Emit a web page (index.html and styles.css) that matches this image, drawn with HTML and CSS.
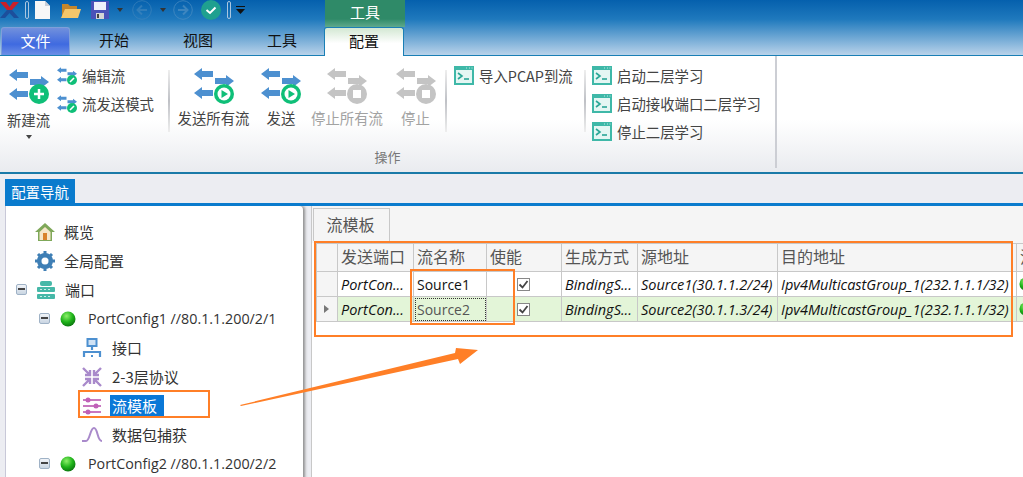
FILE: index.html
```html
<!DOCTYPE html>
<html lang="zh-CN">
<head>
  <meta charset="UTF-8" />
  <title>配置</title>
  <link rel="stylesheet" href="styles.css">
</head>
<body>
  <svg class="defs" width="0" height="0">
    <defs>
      <symbol id="arrows" viewBox="0 0 40 31">
        <path d="M0 6 8 0V3H19V9H8V12Z" />
        <path d="M40 13 32 7V10H21V16H32V19Z" />
        <path d="M0 25 8 19V22H19V28H8V31Z" />
      </symbol>
      <symbol id="term" viewBox="0 0 20 19">
        <rect width="20" height="19" fill="#3fb8a8" />
        <rect x="2" y="4" width="16" height="13" fill="#e4f6f3" />
        <path d="M4 7 8 10 4 13" fill="none" stroke="#2aa696" stroke-width="1.6" />
        <path d="M10 13H15" stroke="#2aa696" stroke-width="1.6" />
        <path d="M12 2H13M15 2H16M17.500 2H18.500" stroke="#bfe9e2" stroke-width="1" />
      </symbol>
      <radialGradient id="ball" cx="0.4" cy="0.3" r="0.75">
        <stop offset="0" stop-color="#8df06a" />
        <stop offset="0.55" stop-color="#1fb31a" />
        <stop offset="1" stop-color="#0a6e0e" />
      </radialGradient>
    </defs>
  </svg>

  <!-- title bar and tabs -->
  <header class="top">
    <div class="qat">
      <div class="qat-icons">
        <svg class="q-logo" width="19" height="18" viewBox="0 0 19 18"><path d="M0 1H6L9.500 6 13 1H19L12 9H7Z" fill="#c8202a" /><path d="M7 9H12L19 17H14L9.500 12 5 17H0Z" fill="#1c4f9c" /></svg>
        <span class="pill"></span>
        <svg class="q-doc" width="15" height="18" viewBox="0 0 15 18"><path d="M0 0H10L15 5V18H0Z" fill="#f7f7f7" /><path d="M10 0V5H15" fill="#c9ced6" /></svg>
        <svg class="q-folder" width="20" height="16" viewBox="0 0 20 16"><path d="M1 2H7L9 4H16V15H1Z" fill="#c4862c" /><path d="M4 7H20L17 16H0Z" fill="#f4c66a" /></svg>
        <svg class="q-save" width="18" height="18" viewBox="0 0 18 18"><path d="M0 0H18V18H0Z" fill="#4a52b8" /><rect x="3" y="1" width="12" height="8" fill="#eef1fb" /><rect x="5" y="12" width="8" height="6" fill="#d5d5d5" /><rect x="6" y="13" width="2" height="4" fill="#444" /></svg>
        <span class="caret q-caret1"></span>
        <svg class="q-back" width="20" height="20" viewBox="0 0 20 20"><circle cx="10" cy="10" r="9.300" fill="none" stroke="#3f85bd" /><path d="M15 10H6M10 5.500 5.500 10 10 14.500" fill="none" stroke="#3f85bd" stroke-width="2" /></svg>
        <span class="caret q-caret2"></span>
        <svg class="q-fwd" width="20" height="20" viewBox="0 0 20 20"><circle cx="10" cy="10" r="9.300" fill="none" stroke="#4f90c4" /><path d="M5 10H14M10 5.500 14.500 10 10 14.500" fill="none" stroke="#4f90c4" stroke-width="2" /></svg>
        <svg class="q-ok" width="20" height="20" viewBox="0 0 20 20"><circle cx="10" cy="10" r="10" fill="#1fa08f" /><path d="M5.500 10 9 13 14.500 7.500" fill="none" stroke="#fff" stroke-width="2" /></svg>
        <span class="pill q-pill2"></span>
        <svg class="q-more" width="9" height="8" viewBox="0 0 9 8"><path d="M0 0.500H9" stroke="#111" /><path d="M0 3H9L4.500 8Z" fill="#111" /></svg>
      </div>
      <div class="ctx-title">工具</div>
    </div>
    <nav class="tabs">
      <div class="tab tab-file">文件</div>
      <div class="tab">开始</div>
      <div class="tab">视图</div>
      <div class="tab">工具</div>
      <div class="tab tab-on">配置</div>
    </nav>
  </header>

  <!-- ribbon -->
  <section class="ribbon">
    <div class="rb-group">
      <div class="rb-tools">
        <div class="big big-new">
          <svg width="40" height="36" viewBox="0 0 40 36">
            <use href="#arrows" width="40" height="31" fill="#4d90d0" y="1" />
            <circle cx="30" cy="26" r="10" fill="#0fbf78" />
            <path d="M30 21V31M25 26H35" stroke="#fff" stroke-width="2.500" />
          </svg>
          <span class="big-text">新建流</span>
          <span class="caret big-caret"></span>
        </div>
        <div class="small-col">
          <div class="small">
            <svg width="20" height="18" viewBox="0 0 20 18">
              <use href="#arrows" width="20" height="16" fill="#4d90d0" />
              <circle cx="15" cy="13" r="5" fill="#0fbf78" />
              <path d="M13 15 17 11" stroke="#fff" stroke-width="1.600" />
            </svg>
            <span>编辑流</span>
          </div>
          <div class="small">
            <svg width="20" height="18" viewBox="0 0 20 18">
              <use href="#arrows" width="20" height="16" fill="#4d90d0" />
              <circle cx="15" cy="13" r="5" fill="#0fbf78" />
              <path d="M13 15 17 11" stroke="#fff" stroke-width="1.600" />
            </svg>
            <span>流发送模式</span>
          </div>
        </div>
        <span class="sep"></span>
        <div class="big big-all">
          <svg width="40" height="36" viewBox="0 0 40 36">
            <use href="#arrows" width="40" height="31" fill="#4d90d0" />
            <circle cx="30" cy="26" r="10" fill="#0fbf78" />
            <circle cx="30" cy="26" r="6.500" fill="#fff" />
            <path d="M27.500 22 34 26 27.500 30Z" fill="#0fbf78" />
          </svg>
          <span class="big-text">发送所有流</span>
        </div>
        <div class="big big-send">
          <svg width="40" height="36" viewBox="0 0 40 36">
            <use href="#arrows" width="40" height="31" fill="#4d90d0" />
            <circle cx="30" cy="26" r="10" fill="#0fbf78" />
            <circle cx="30" cy="26" r="6.500" fill="#fff" />
            <path d="M27.500 22 34 26 27.500 30Z" fill="#0fbf78" />
          </svg>
          <span class="big-text">发送</span>
        </div>
        <div class="big big-stopall off">
          <svg width="40" height="36" viewBox="0 0 40 36">
            <use href="#arrows" width="40" height="31" fill="#c4c4c4" />
            <circle cx="30" cy="26" r="10" fill="#c4c4c4" />
            <rect x="26" y="22" width="8" height="8" fill="#fff" />
          </svg>
          <span class="big-text">停止所有流</span>
        </div>
        <div class="big big-stop off">
          <svg width="40" height="36" viewBox="0 0 40 36">
            <use href="#arrows" width="40" height="31" fill="#c4c4c4" />
            <circle cx="30" cy="26" r="10" fill="#c4c4c4" />
            <rect x="26" y="22" width="8" height="8" fill="#fff" />
          </svg>
          <span class="big-text">停止</span>
        </div>
        <span class="sep"></span>
        <div class="small-col col-pcap">
          <div class="small"><svg width="20" height="19"><use href="#term" /></svg><span>导入PCAP到流</span></div>
        </div>
        <span class="sep"></span>
        <div class="small-col col-learn">
          <div class="small"><svg width="20" height="19"><use href="#term" /></svg><span>启动二层学习</span></div>
          <div class="small"><svg width="20" height="19"><use href="#term" /></svg><span>启动接收端口二层学习</span></div>
          <div class="small"><svg width="20" height="19"><use href="#term" /></svg><span>停止二层学习</span></div>
        </div>
      </div>
      <div class="rb-label">操作</div>
    </div>
  </section>

  <main class="main">
    <div class="nav-tab">配置导航</div>
    <div class="panes">
      <aside class="tree">
        <div class="row lv0">
          <svg width="20" height="20" viewBox="0 0 20 20"><path d="M10 1 0 10H3V19H17V10H20Z" fill="#7fa85a" /><path d="M4.500 10 10 5 15.500 10V18H4.500Z" fill="#f6e6c8" /><rect x="8" y="11" width="4" height="7" fill="#d9822b" /></svg>
          <span>概览</span>
        </div>
        <div class="row lv0">
          <svg width="20" height="20" viewBox="0 0 20 20"><circle cx="10" cy="10" r="6" fill="none" stroke="#3f7fb5" stroke-width="4" /><path d="M10 0V20M0 10H20M3 3 17 17M17 3 3 17" stroke="#3f7fb5" stroke-width="3" /><circle cx="10" cy="10" r="3.500" fill="#fff" /></svg>
          <span>全局配置</span>
        </div>
        <div class="row lv0 has-exp">
          <span class="exp"></span>
          <svg width="20" height="20" viewBox="0 0 20 20"><rect x="4" y="1" width="12" height="5" rx="2" fill="#46b8a8" /><rect x="1" y="7" width="18" height="5" rx="1" fill="#46b8a8" /><rect x="1" y="14" width="18" height="5" rx="1" fill="#46b8a8" /><path d="M4 9.500H16M4 16.500H16" stroke="#c8eee8" stroke-dasharray="2 2" /></svg>
          <span>端口</span>
        </div>
        <div class="row lv1">
          <span class="exp"></span>
          <svg width="16" height="16" viewBox="0 0 16 16"><circle cx="8" cy="8" r="7.500" fill="url(#ball)" /></svg>
          <span>PortConfig1 //80.1.1.200/2/1</span>
        </div>
        <div class="row lv2">
          <svg width="20" height="20" viewBox="0 0 20 20"><rect x="5.500" y="1" width="9" height="7" fill="#cfe2f5" stroke="#4d90d0" stroke-width="2" /><path d="M10 8V12M2 19V14H18V19" fill="none" stroke="#4d90d0" stroke-width="2.200" /><path d="M10 13V19" stroke="#4d90d0" stroke-width="2" stroke-dasharray="2 2" /></svg>
          <span>接口</span>
        </div>
        <div class="row lv2">
          <svg width="20" height="20" viewBox="0 0 20 20"><path d="M1 1 8 8M8 3V8H3M19 1 12 8M12 3V8H17M1 19 8 12M8 17V12H3M19 19 12 12M12 17V12H17" fill="none" stroke="#a98acb" stroke-width="2.400" /></svg>
          <span>2-3层协议</span>
        </div>
        <div class="row lv2">
          <svg width="20" height="20" viewBox="0 0 20 20"><path d="M1 4H19M1 10H19M1 16H19" stroke="#c878c0" stroke-width="2" /><circle cx="6" cy="4" r="2.500" fill="#c060b8" /><circle cx="14" cy="10" r="2.500" fill="#c060b8" /><circle cx="6" cy="16" r="2.500" fill="#c060b8" /></svg>
          <span class="sel">流模板</span>
        </div>
        <div class="row lv2">
          <svg width="20" height="20" viewBox="0 0 20 20"><path d="M0 16H4C8 16 8 3 12 3S15 16 20 16" fill="none" stroke="#a98acb" stroke-width="2" /></svg>
          <span>数据包捕获</span>
        </div>
        <div class="row lv1">
          <span class="exp"></span>
          <svg width="16" height="16" viewBox="0 0 16 16"><circle cx="8" cy="8" r="7.500" fill="url(#ball)" /></svg>
          <span>PortConfig2 //80.1.1.200/2/2</span>
        </div>
      </aside>

      <section class="work">
        <div class="work-tabs"><div class="work-tab">流模板</div></div>
        <table class="grid">
          <colgroup>
            <col class="c-head"><col class="c-port"><col class="c-name"><col class="c-en"><col class="c-gen"><col class="c-src"><col class="c-dst"><col class="c-more">
          </colgroup>
          <thead>
            <tr><th></th><th>发送端口</th><th>流名称</th><th>使能</th><th>生成方式</th><th>源地址</th><th>目的地址</th><th>流</th></tr>
          </thead>
          <tbody>
            <tr>
              <td class="rh"></td>
              <td class="it">PortCon...</td>
              <td>Source1</td>
              <td class="ck"><span class="box"><svg width="11" height="11" viewBox="0 0 11 11"><path d="M1.500 5.500 4.500 8.500 9.500 2" fill="none" stroke="#444" stroke-width="1.800" /></svg></span></td>
              <td class="it">BindingS...</td>
              <td class="it">Source1(30.1.1.2/24)</td>
              <td class="it">Ipv4MulticastGroup_1(232.1.1.1/32)</td>
              <td class="led"><svg width="14" height="14" viewBox="0 0 16 16"><circle cx="8" cy="8" r="7.500" fill="url(#ball)" /></svg></td>
            </tr>
            <tr class="cur">
              <td class="rh"><span class="rh-mark"></span></td>
              <td class="it">PortCon...</td>
              <td class="focus">Source2</td>
              <td class="ck"><span class="box"><svg width="11" height="11" viewBox="0 0 11 11"><path d="M1.500 5.500 4.500 8.500 9.500 2" fill="none" stroke="#444" stroke-width="1.800" /></svg></span></td>
              <td class="it">BindingS...</td>
              <td class="it">Source2(30.1.1.3/24)</td>
              <td class="it">Ipv4MulticastGroup_1(232.1.1.1/32)</td>
              <td class="led"><svg width="14" height="14" viewBox="0 0 16 16"><circle cx="8" cy="8" r="7.500" fill="url(#ball)" /></svg></td>
            </tr>
          </tbody>
        </table>
      </section>
    </div>
  </main>

  <!-- screenshot annotations -->
  <div class="mark mark-table"></div>
  <div class="mark mark-name"></div>
  <div class="mark mark-nav"></div>
  <svg class="mark-arrow" width="240" height="62" viewBox="0 0 240 62">
    <path d="M1 60 216 8 217 3 239 5 221 19 219 14 2 61Z" fill="#ff7f27" />
  </svg>
</body>
</html>
```

FILE: styles.css
```css
:root {
  --cjk: "Noto Sans CJK SC", sans-serif;
  --ui: "Open Sans", "Noto Sans CJK SC", sans-serif;
  --orange: #ff7f27;
  --line: #c8c8c8;
}
* { box-sizing: border-box; margin: 0; padding: 0; }
html, body { width: 1023px; height: 477px; overflow: hidden; }
body { position: relative; font-family: var(--cjk); color: #333; background: #ecedf2; }
svg { display: block; flex: none; }
.defs { position: absolute; }

/* title bar */
.top {
  height: 56px;
  background: linear-gradient(#0560ad, #1f79bd 35%, #b9d3ea);
  border-bottom: 1px solid #1a7fb5;
}
.qat { display: flex; height: 27px; }
.qat-icons { display: flex; align-items: center; width: 325px; height: 20px; }
.q-logo { margin-right: 6px; }
.pill { width: 4px; height: 18px; border: 1px solid #a9c6e0; border-radius: 2px; }
.q-doc { margin-left: 6px; }
.q-folder { margin-left: 11px; }
.q-save { margin-left: 10px; }
.caret { width: 0; height: 0; border: 3.500px solid transparent; border-top: 4px solid #333; border-bottom: 0; }
.q-caret1 { margin-left: 8px; }
.q-back { margin-left: 9px; opacity: 0.7; }
.q-caret2 { margin-left: 8px; }
.q-fwd { margin-left: 7px; opacity: 0.7; }
.q-ok { margin-left: 8px; }
.q-pill2 { margin-left: 6px; }
.q-more { margin-left: 5px; }
.ctx-title {
  width: 80px;
  background: linear-gradient(#2f8a68, #2f8a68 70%, #5fa98c);
  color: #fff;
  font-size: 15px;
  line-height: 23px;
  text-align: center;
}

/* tabs */
.tabs { display: flex; height: 28px; }
.tab { width: 84px; color: #111; font-size: 15px; line-height: 26px; text-align: center; }
.tab-file {
  width: 69px;
  margin: 0 2px 0 1px;
  background: linear-gradient(#7190dc, #3f6ae0 60%, #6c8fe6);
  border: 1px solid #7f9fd8;
  border-bottom: 0;
  border-radius: 3px 3px 0 0;
  color: #fff;
}
.tab-on {
  width: 80px;
  height: 29px;
  background: linear-gradient(#d3e8d3, #fff 55%);
  border: 1px solid #1a7fb5;
  border-bottom: 0;
  border-radius: 3px 3px 0 0;
}

/* ribbon */
.ribbon {
  display: flex;
  height: 118px;
  background: linear-gradient(#fff 55%, #e9ebef);
  border-bottom: 2px solid #1a7aa8;
}
.rb-group {
  width: 777px;
  display: flex;
  flex-direction: column;
  border-right: 2px solid #ccced4;
  margin-bottom: 4px;
}
.rb-tools { display: flex; height: 90px; padding-top: 12px; }
.rb-label { color: #777; font-size: 13px; text-align: center; line-height: 18px; margin-top: 2px; }
.sep { width: 2px; height: 62px; margin-top: 2px; background: linear-gradient(#eee, #bfc1c6 50%, #eee); flex: none; }

.big { display: flex; flex-direction: column; align-items: center; flex: none; color: #444; }
.big-text { font-size: 14.400px; line-height: 20px; margin-top: 4px; white-space: nowrap; }
.big-new { width: 57px; }
.big-new .big-text { margin-top: 6px; }
.big-caret { margin-top: 5px; border-top-color: #444; }
.big-all { width: 85px; margin-left: 1px; }
.big-send { width: 50px; }
.big-stopall { width: 82px; }
.big-stop { width: 55px; margin-right: 2px; }
.off { color: #a2a2a2; }

.small-col { display: flex; flex-direction: column; flex: none; gap: 9px; width: 111px; margin-top: -2px; }
.small { display: flex; align-items: center; gap: 5px; height: 19px; color: #444; font-size: 14.400px; white-space: nowrap; }
.col-pcap { width: 137px; padding-left: 7px; }
.col-learn { width: 186px; padding-left: 6px; }

/* lower area */
.main { padding: 5px 0 0 5px; }
.nav-tab {
  width: 70px;
  height: 24px;
  background: #0a7bcd;
  color: #fff;
  font-size: 14.400px;
  line-height: 25px;
  text-align: center;
}
.panes { display: flex; border-top: 3px solid #0a7bcd; height: 280px; overflow: hidden; }
.tree {
  flex: none;
  width: 298px;
  padding-top: 11px;
  background: #fff;
  border-left: 1px solid #c8c8d8;
  border-radius: 0 4px 0 0;
  box-shadow: 2px 0 3px #8f8f8f;
}
.row { display: flex; align-items: center; height: 29px; font-size: 15px; white-space: nowrap; }
.lv0 { padding-left: 29px; gap: 9px; }
.lv0.has-exp { padding-left: 10px; }
.lv1 { padding-left: 33px; }
.lv1 .exp { margin-right: 10px; }
.lv1 svg { margin-right: 12px; }
.lv1 span:last-child { font-family: var(--ui); font-size: 14.300px; }
.lv2 { padding-left: 76px; gap: 10px; }
.exp {
  width: 11px;
  height: 11px;
  background: linear-gradient(#f1f4f8, #c9d5e2);
  border: 1px solid #9fb2c6;
  border-radius: 2px;
  flex: none;
}
.exp::after { content: ""; display: block; margin: 3px 1px 0; height: 2px; background: #444; }
.sel { background: #0a78d7; color: #fff; padding: 0 7px 0 2px; line-height: 21px; margin-left: -2px; }

/* grid */
.work { flex: none; width: 720px; margin-left: 8px; background: #fff; border-left: 1px solid #c8c8c8; }
.work-tabs { height: 37px; padding: 2px 0 0 1px; background: #f5f5f5; }
.work-tab {
  width: 77px;
  height: 33px;
  background: #f5f5f5;
  border: 1px solid var(--line);
  border-bottom: 0;
  color: #555;
  font-size: 16px;
  line-height: 31px;
  text-align: center;
  padding-right: 2px;
}
.grid { table-layout: fixed; width: 720px; margin-left: 4px; border-collapse: collapse; font-family: var(--ui); }
.c-head { width: 21px; }
.c-port { width: 76px; }
.c-name { width: 73px; }
.c-en { width: 75px; }
.c-gen { width: 76px; }
.c-src { width: 140px; }
.c-dst { width: 239px; }
.c-more { width: 20px; }
.grid th {
  height: 28px;
  background: #f5f5f5;
  border: 1px solid var(--line);
  color: #555;
  font: 400 16px var(--cjk);
  text-align: left;
  padding: 0 0 3px 3px;
  white-space: nowrap;
  overflow: hidden;
}
.grid td {
  height: 25px;
  border: 1px solid var(--line);
  border-top-color: #d8d8d8;
  color: #111;
  font-size: 14px;
  padding-left: 3px;
  white-space: nowrap;
  overflow: hidden;
}
.grid .it { font-style: italic; font-size: 14.500px; }
.grid .rh { background: #f5f5f5; padding: 0; }
.grid .led { padding-left: 2px; }
.rh-mark { display: block; width: 0; height: 0; margin-left: 7px; border: 4px solid transparent; border-left: 5px solid #777; border-right: 0; }
.ck .box { display: block; width: 13px; height: 13px; margin-left: 27px; background: #fff; border: 1px solid #888; }
.cur td { background: #e3f5d8; }
.cur .rh { background: #f5f5f5; }
.grid .focus { color: #555; outline: 1px dotted #333; outline-offset: -2px; }

/* annotations */
.mark { position: absolute; border: 2px solid var(--orange); }
.mark-table { left: 314px; top: 241px; width: 699px; height: 96px; }
.mark-name { left: 410px; top: 269px; width: 105px; height: 56px; }
.mark-nav { left: 78px; top: 390px; width: 132px; height: 28px; }
.mark-arrow { position: absolute; left: 239px; top: 345px; }
```
